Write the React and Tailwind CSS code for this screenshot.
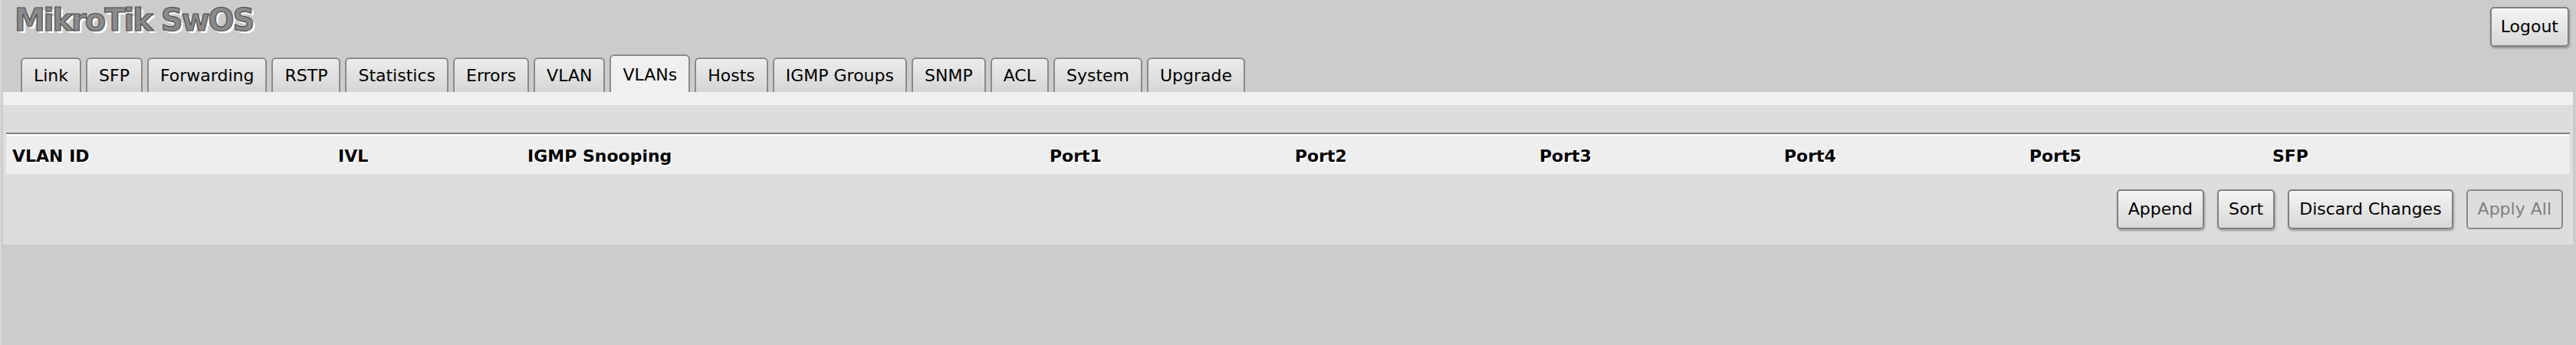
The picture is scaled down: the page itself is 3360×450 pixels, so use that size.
import React from "react";

const tabs = ["Link","SFP","Forwarding","RSTP","Statistics","Errors","VLAN","VLANs","Hosts","IGMP Groups","SNMP","ACL","System","Upgrade"];
const cols = ["VLAN ID","IVL","IGMP Snooping","Port1","Port2","Port3","Port4","Port5","SFP"];

function Btn({ children, disabled }) {
  return disabled ? (
    <div className="h-[52px] px-[13px] flex items-center border-2 border-[#8a8a8a] rounded-[5px] bg-[#dddddd] text-[#808080] leading-none">
      {children}
    </div>
  ) : (
    <div className="h-[52px] px-[13px] flex items-center border-2 border-[#808080] rounded-[5px] bg-gradient-to-b from-[#f4f4f4] to-[#d8d8d8] text-black leading-none shadow-[1px_2px_3px_rgba(0,0,0,0.3)]">
      {children}
    </div>
  );
}

export default function App() {
  return (
    <div className="min-h-[450px] bg-[#cccccc] border-l-2 border-[#d6d6d6] font-['DejaVu_Sans','Liberation_Sans',sans-serif] text-[22px] text-black">
      <div className="h-[71px] flex justify-between items-start">
        <div className="pl-[17px] pt-[6px] text-[40px] leading-none font-bold tracking-[-2px] text-[#8a8a8a] [-webkit-text-stroke:1.2px_#505050] [text-shadow:3px_3px_0_#ffffff]">
          MikroTik SwOS
        </div>
        <div className="mt-[9px] mr-[9px]">
          <div className="h-[52px] px-[12px] flex items-center border-2 border-[#808080] rounded-[5px] bg-gradient-to-b from-[#f4f4f4] to-[#d8d8d8] text-black leading-none shadow-[1px_2px_3px_rgba(0,0,0,0.3)]">
            Logout
          </div>
        </div>
      </div>
      <div className="flex items-end gap-[6px] pl-[25px]">
        {tabs.map((t) =>
          t === "VLANs" ? (
            <div key={t} className="h-[49px] pt-[3px] px-[15px] flex items-center border-2 border-b-0 border-[#8a8a8a] rounded-t-[6px] bg-[#f0f0f0] leading-none">
              {t}
            </div>
          ) : (
            <div key={t} className="h-[45px] px-[15px] flex items-center border-2 border-b-0 border-[#8a8a8a] rounded-t-[6px] bg-gradient-to-b from-[#ececec] to-[#d6d6d6] leading-none">
              {t}
            </div>
          )
        )}
      </div>
      <div className="ml-[2px] mr-[4px] bg-[#dddddd]">
        <div className="h-[17px] bg-[#f0f0f0]" />
        <div className="h-[36px]" />
        <div className="ml-[4px] mr-[4px] border-t-2 border-[#808080]">
          <div className="border-t-2 border-white">
            <div className="h-[50px] bg-[#eeeeee] grid grid-cols-[425px_247px_681px_320px_319px_319px_320px_317px_1fr] items-center font-bold [text-shadow:2px_2px_0_#ffffff]">
              {cols.map((c) => (
                <div key={c} className="px-[8px] pt-[3px] leading-none">{c}</div>
              ))}
            </div>
          </div>
        </div>
        <div className="flex justify-end gap-[17px] pt-[20px] pb-[20px] pr-[13px]">
          <Btn>Append</Btn>
          <Btn>Sort</Btn>
          <Btn>Discard Changes</Btn>
          <Btn disabled>Apply All</Btn>
        </div>
      </div>
    </div>
  );
}
